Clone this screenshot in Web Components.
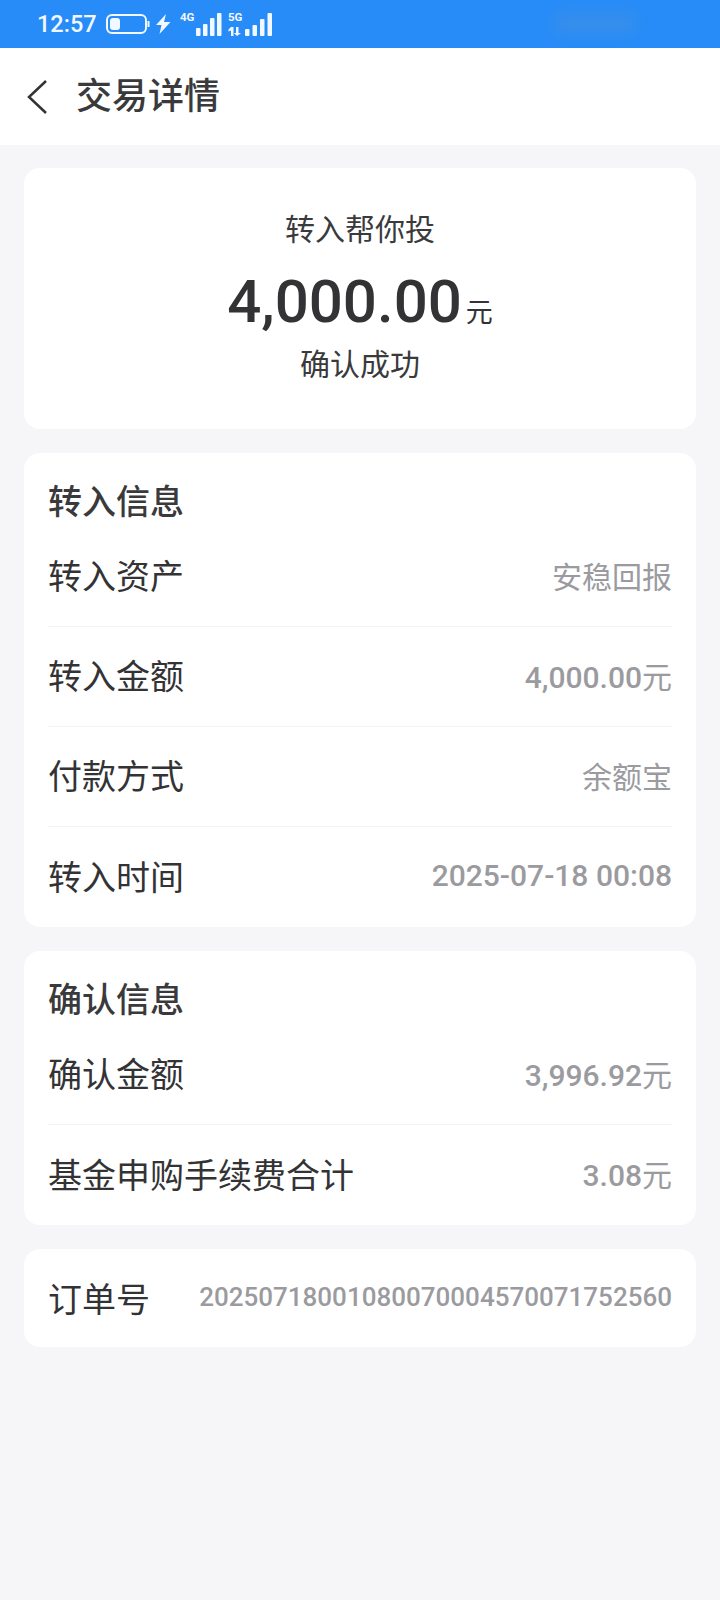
<!DOCTYPE html>
<html lang="zh">
<head>
<meta charset="utf-8">
<style>
  html, body { margin: 0; padding: 0; background: #f6f6f9; }
  body { width: 720px; height: 1600px; overflow: hidden; font-family: Roboto, "Noto Sans CJK SC", sans-serif; color: #333335; }
</style>
</head>
<body>
<status-bar></status-bar>
<nav-header>交易详情</nav-header>
<page-body>
  <summary-card title-text="转入帮你投" amount="4,000.00" unit="元" status="确认成功"></summary-card>
  <info-card heading="转入信息">
    <info-row label="转入资产" value="安稳回报"></info-row>
    <info-row label="转入金额" value="4,000.00元"></info-row>
    <info-row label="付款方式" value="余额宝"></info-row>
    <info-row label="转入时间" value="2025-07-18 00:08"></info-row>
  </info-card>
  <info-card heading="确认信息">
    <info-row label="确认金额" value="3,996.92元"></info-row>
    <info-row label="基金申购手续费合计" value="3.08元"></info-row>
  </info-card>
  <info-card>
    <info-row label="订单号" value="20250718001080070004570071752560" small></info-row>
  </info-card>
</page-body>

<script>
class StatusBar extends HTMLElement {
  constructor() {
    super();
    this.attachShadow({ mode: "open" });
  }
  connectedCallback() {
    this.shadowRoot.innerHTML = `
      <style>
        :host { display: flex; align-items: center; height: 48px; background: #278cf8; color: #f2f8ff; padding-left: 37px; box-sizing: border-box; position: relative; overflow: hidden; }
        .time { font-size: 23.500px; font-weight: 500; width: 69px; }
        svg { display: block; flex: none; }
        .net { display: flex; height: 24px; margin-left: 9px; }
        .tag { font-size: 11.500px; font-weight: 700; line-height: 11px; width: 16px; }
        .cell { display: flex; flex-direction: column; justify-content: space-between; width: 17px; margin-left: 4px; }
        .blur { position: absolute; left: 555px; top: 12px; width: 80px; height: 22px; background: #3c8fe6; filter: blur(7px); opacity: .7; }
      </style>
      <span class="time">12:57</span>
      <svg width="44" height="20" viewBox="0 0 44 20">
        <rect x="1" y="1" width="39" height="18" rx="5" fill="none" stroke="#f2f8ff" stroke-width="2"/>
        <rect x="4" y="4" width="10" height="12" rx="3" fill="#f2f8ff"/>
        <rect x="41.500" y="7" width="2" height="6" fill="#f2f8ff"/>
      </svg>
      <svg style="margin-left:5px" width="16" height="20" viewBox="0 0 16 20">
        <path d="M11 0 1 11h5.500l-2 9L15.500 8H9z" fill="#f2f8ff"/>
      </svg>
      <div class="net">
        <span class="tag">4G</span>
        <svg width="28" height="24" viewBox="0 0 28 24" fill="#f2f8ff">
          <rect x="0" y="16" width="4.500" height="8" rx="1"/><rect x="7" y="12" width="4.500" height="12" rx="1"/>
          <rect x="14" y="6" width="4.500" height="18" rx="1"/><rect x="21" y="1" width="4.500" height="23" rx="1"/>
        </svg>
        <div class="cell">
          <span class="tag">5G</span>
          <svg width="14" height="9" viewBox="0 0 14 9" fill="#f2f8ff">
            <path d="M3 0h2.500v9H3V3.500L.500 4.500V2.500zM8 0h2.500v6H13L9 9 6 6h2z"/>
          </svg>
        </div>
        <svg width="28" height="24" viewBox="0 0 28 24" fill="#f2f8ff">
          <rect x="0" y="17" width="4.500" height="7" rx="1"/><rect x="7.500" y="13" width="4.500" height="11" rx="1"/>
          <rect x="15" y="7" width="4.500" height="17" rx="1"/><rect x="22.500" y="1" width="4.500" height="23" rx="1"/>
        </svg>
      </div>
      <div class="blur"></div>
    `;
  }
}

class NavHeader extends HTMLElement {
  constructor() {
    super();
    this.attachShadow({ mode: "open" });
  }
  connectedCallback() {
    this.shadowRoot.innerHTML = `
      <style>
        :host { display: flex; align-items: center; height: 97px; background: #fff; padding-left: 26px; box-sizing: border-box; }
        svg { display: block; margin-right: 29px; }
        .title { font-size: 36px; font-weight: 500; color: #3a3a3c; line-height: 1; }
      </style>
      <svg width="21" height="36" viewBox="0 0 21 36"><path d="M20 2 3 18l17 16" fill="none" stroke="#333335" stroke-width="2.500"/></svg>
      <span class="title"><slot></slot></span>
    `;
  }
}

class PageBody extends HTMLElement {
  constructor() {
    super();
    this.attachShadow({ mode: "open" });
  }
  connectedCallback() {
    this.shadowRoot.innerHTML = `
      <style>
        :host { display: flex; flex-direction: column; gap: 24px; padding: 23px 24px 0; }
      </style>
      <slot></slot>
    `;
  }
}

class SummaryCard extends HTMLElement {
  constructor() {
    super();
    this.attachShadow({ mode: "open" });
  }
  connectedCallback() {
    this.shadowRoot.innerHTML = `
      <style>
        :host { display: flex; flex-direction: column; align-items: center; height: 261px; box-sizing: border-box; padding-top: 42px; background: #fff; border-radius: 16px; }
        .top, .status { font-size: 30px; line-height: 40px; color: #3a3a3c; }
        .amount { display: flex; align-items: baseline; margin-top: 11px; height: 82px; line-height: 82px; font-size: 60px; font-weight: 500; color: #333335; }
        .unit { font-size: 27px; font-weight: 400; margin-left: 4px; }
        .status { margin-top: 2px; }
      </style>
      <div class="top">${this.getAttribute("title-text")}</div>
      <div class="amount">${this.getAttribute("amount")}<span class="unit">${this.getAttribute("unit")}</span></div>
      <div class="status">${this.getAttribute("status")}</div>
    `;
  }
}

class InfoCard extends HTMLElement {
  constructor() {
    super();
    this.attachShadow({ mode: "open" });
  }
  connectedCallback() {
    const heading = this.getAttribute("heading");
    this.shadowRoot.innerHTML = `
      <style>
        :host { display: block; padding: 0 24px; background: #fff; border-radius: 16px; }
        .heading { font-size: 34px; font-weight: 500; color: #3a3a3c; line-height: 40px; padding-top: 29px; margin-bottom: 5px; }
        ::slotted(info-row:not(:last-child)) { border-bottom: 1px solid #f3f3f5; }
      </style>
      ${heading ? `<div class="heading">${heading}</div>` : ""}
      <slot></slot>
    `;
  }
}

class InfoRow extends HTMLElement {
  constructor() {
    super();
    this.attachShadow({ mode: "open" });
  }
  connectedCallback() {
    // digits are medium weight, the chinese part of a value stays regular
    const value = this.getAttribute("value").replace(/[\u4e00-\u9fff]+/g, (s) => `<span class="cjk">${s}</span>`);
    this.shadowRoot.innerHTML = `
      <style>
        :host { display: flex; justify-content: space-between; align-items: center; height: 100px; padding-bottom: 4px; box-sizing: border-box; }
        :host([small]) { height: 98px; padding-bottom: 2px; }
        .label { font-size: 34px; color: #333335; white-space: nowrap; }
        .value { font-size: 30px; font-weight: 500; color: #9b9b9f; white-space: nowrap; }
        :host([small]) .value { font-size: 26px; }
        .cjk { font-weight: 400; }
      </style>
      <span class="label">${this.getAttribute("label")}</span>
      <span class="value">${value}</span>
    `;
  }
}

customElements.define("status-bar", StatusBar);
customElements.define("nav-header", NavHeader);
customElements.define("page-body", PageBody);
customElements.define("summary-card", SummaryCard);
customElements.define("info-card", InfoCard);
customElements.define("info-row", InfoRow);
</script>
</body>
</html>
